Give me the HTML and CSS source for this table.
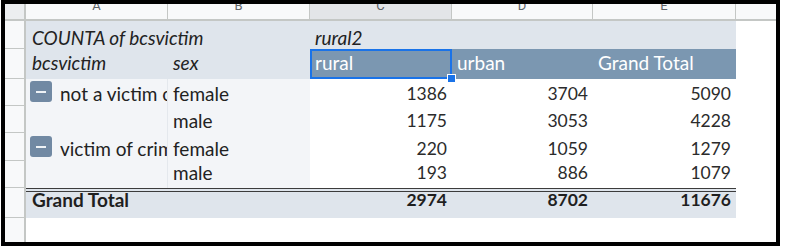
FILE: index.html
```html
<!DOCTYPE html>
<html>
<head>
<meta charset="utf-8">
<link rel="stylesheet" href="styles.css">
</head>
<body>
<div class="frame">
  <div class="sheet">
    <!-- column headers -->
    <div class="corner"></div>
    <div class="ch"><span>A</span></div>
    <div class="ch"><span>B</span></div>
    <div class="ch sel"><span>C</span></div>
    <div class="ch"><span>D</span></div>
    <div class="ch"><span>E</span></div>
    <div class="ch last"></div>

    <!-- row 1 -->
    <div class="rh"></div>
    <div class="c lh r1 first span2 it">COUNTA of bcsvictim</div>
    <div class="c lh r1 it">rural2</div>
    <div class="c lh r1"></div>
    <div class="c lh r1"></div>
    <div class="c r1"></div>

    <!-- row 2 -->
    <div class="rh"></div>
    <div class="c lh r2 first it">bcsvictim</div>
    <div class="c lh r2 it">sex</div>
    <div class="c hb r2 selected">rural<span class="handle"></span></div>
    <div class="c hb r2">urban</div>
    <div class="c hb r2">Grand Total</div>
    <div class="c r2"></div>

    <!-- row 3 -->
    <div class="rh"></div>
    <div class="c ld r3 grp"><span class="minus"></span><span class="lbl">not a victim of crime</span></div>
    <div class="c ld r3">female</div>
    <div class="c r3 num">1386</div>
    <div class="c r3 num">3704</div>
    <div class="c r3 num">5090</div>
    <div class="c r3"></div>

    <!-- row 4 -->
    <div class="rh"></div>
    <div class="c ld r4 grp"></div>
    <div class="c ld r4">male</div>
    <div class="c r4 num">1175</div>
    <div class="c r4 num">3053</div>
    <div class="c r4 num">4228</div>
    <div class="c r4"></div>

    <!-- row 5 -->
    <div class="rh"></div>
    <div class="c ld r5 grp"><span class="minus"></span><span class="lbl">victim of crime</span></div>
    <div class="c ld r5">female</div>
    <div class="c r5 num">220</div>
    <div class="c r5 num">1059</div>
    <div class="c r5 num">1279</div>
    <div class="c r5"></div>

    <!-- row 6 -->
    <div class="rh"></div>
    <div class="c ld r6 grp"></div>
    <div class="c ld r6">male</div>
    <div class="c r6 num">193</div>
    <div class="c r6 num">886</div>
    <div class="c r6 num">1079</div>
    <div class="c r6"></div>

    <!-- row 7 -->
    <div class="rh"></div>
    <div class="c gt r7 first">Grand Total</div>
    <div class="c gt r7"></div>
    <div class="c gt r7 num">2974</div>
    <div class="c gt r7 num">8702</div>
    <div class="c gt r7 num">11676</div>
    <div class="c r7"></div>

    <!-- row 8 -->
    <div class="rh end"></div>
    <div class="c"></div>
    <div class="c"></div>
    <div class="c"></div>
    <div class="c"></div>
    <div class="c"></div>
    <div class="c"></div>
  </div>
</div>
</body>
</html>
```

FILE: styles.css
```css
html, body {
  margin: 0;
  padding: 0;
  background: #ffffff;
}

body {
  font-family: Lato, "Noto Sans", sans-serif;
}

.frame {
  margin-left: 1px;
  width: 779px;
  height: 246px;
  border: 4px solid #000;
  box-sizing: border-box;
  overflow: hidden;
  background: #fff;
}

.sheet {
  display: grid;
  grid-template-columns: 21px 142px 142px 142px 141px 143px 1fr;
  grid-template-rows: 17px 28px 30px 27px 27px 28px 27px 30px 1fr;
  height: 100%;
}

/* headers */
.corner {
  background: #eceef0;
  border-right: 2px solid #c4c7c5;
  border-bottom: 2px solid #c4c7c5;
}

.ch {
  background: #f8f9fa;
  border-right: 1px solid #c4c7c5;
  border-bottom: 2px solid #c4c7c5;
  display: flex;
  justify-content: center;
  align-items: flex-start;
  font-family: Roboto, "Liberation Sans", sans-serif;
  font-size: 13px;
  color: #5f6368;
  overflow: visible;
}

.ch span {
  line-height: 13px;
  margin-top: -5px;
}

.ch.sel {
  background: #e3e5e8;
}

.ch.last {
  border-right: none;
}

.rh {
  background: #f8f9fa;
  border-right: 2px solid #c4c7c5;
  border-bottom: 1px solid #c4c7c5;
}

.rh.end {
  border-bottom: none;
}

/* cells */
.c {
  display: flex;
  align-items: flex-end;
  white-space: nowrap;
  overflow: hidden;
  font-size: 19px;
  line-height: 20px;
  color: #222;
  padding: 0 5px;
  box-sizing: border-box;
  min-width: 0;
}

.first {
  padding-left: 6px;
}

.span2 {
  grid-column: span 2;
}

.it {
  font-style: italic;
}

.num {
  justify-content: flex-end;
  color: #2b2b2b;
  font-size: 17.5px;
}

.r1 { padding-bottom: 1px; }
.r2 { padding-bottom: 6px; }
.r3 { padding-bottom: 2px; }
.r4 { padding-bottom: 2px; }
.r5 { padding-bottom: 2px; }
.r6 { padding-bottom: 5px; }
.r7 { padding-bottom: 8px; }

.lh {
  background: #dfe5ec;
}

.hb {
  background: #7b97b1;
  color: #ffffff;
}

.ld {
  background: #f3f5f8;
}

.grp {
  padding-left: 4px;
  padding-right: 0;
  border-right: 1px solid #e4e8ed;
}

.minus {
  flex: none;
  width: 22px;
  height: 21px;
  border-radius: 3px;
  background: #7189a3;
  margin-right: 8px;
  margin-bottom: 2px;
  display: flex;
  align-items: center;
  justify-content: center;
}

.minus::before {
  content: "";
  width: 10px;
  height: 2px;
  background: #eef2f6;
}

.lbl {
  overflow: hidden;
}

.gt {
  background: #dfe5ec;
  font-weight: 700;
  color: #1f1f1f;
  border-top: 4px double #3c3c3c;
}

.selected {
  position: relative;
  overflow: visible;
}

.selected::after {
  content: "";
  position: absolute;
  inset: 0;
  border: 2px solid #1a73e8;
}

.handle {
  position: absolute;
  right: -4px;
  bottom: -4px;
  width: 7px;
  height: 7px;
  background: #1a73e8;
  border: 1px solid #ffffff;
  z-index: 2;
}
```
